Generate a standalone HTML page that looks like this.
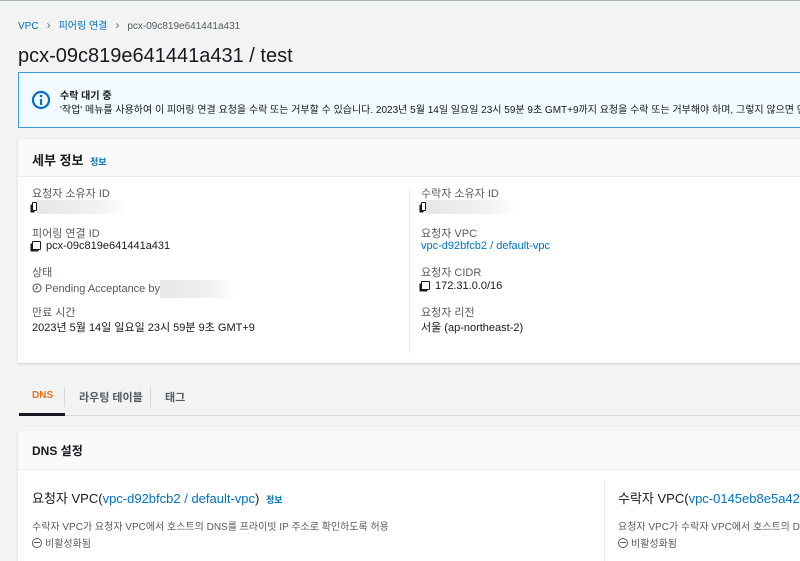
<!DOCTYPE html>
<html><head><meta charset="utf-8"><style>
*{margin:0;padding:0;box-sizing:border-box}
html,body{height:556px}
body{width:800px;overflow:hidden;background:#f2f3f3;font-family:"Liberation Sans","Noto Sans CJK KR",sans-serif;color:#16191f;position:relative;border-top:1px solid #aab7b8}
.a{position:absolute;white-space:nowrap}
.lnk{color:#0073bb}
.lbl{color:#545b64;font-size:11px}
.val{font-size:11px}
.blur{display:inline-block;width:90px;height:14px;background:linear-gradient(90deg,#e6e6e6,#f2f2f2 70%,#fff);vertical-align:middle}
.cp{display:inline-block;width:9px;height:9px;border:1.5px solid #16191f;border-radius:1px;position:relative;margin-right:5px;vertical-align:-1px;background:#fff;box-shadow:-2px 2px 0 -0.5px #16191f}
</style></head><body>
<div class="a" style="left:18px;top:16px;font-size:10px"><span class="lnk">VPC</span><span style="color:#687078;margin:0 8px;font-size:12px">›</span><span class="lnk">피어링 연결</span><span style="color:#687078;margin:0 8px;font-size:12px">›</span><span style="color:#545b64">pcx-09c819e641441a431</span></div>
<div class="a" style="left:18px;top:44px;font-size:20px">pcx-09c819e641441a431 / test</div>
<div class="a" style="left:18px;top:71px;width:800px;height:56px;border:1px solid #3d9ad8;background:#f1faff"></div>
<svg class="a" style="left:31px;top:89px" width="20" height="20" viewBox="0 0 20 20"><circle cx="10" cy="10" r="8" fill="none" stroke="#0073bb" stroke-width="2.2"/><circle cx="10" cy="6" r="1.3" fill="#0073bb"/><path d="M10 9v6" stroke="#0073bb" stroke-width="2.2"/></svg>
<div class="a" style="left:60px;top:86px;font-size:10px;font-weight:bold">수락 대기 중</div>
<div class="a" style="left:60px;top:100px;font-size:10px">'작업' 메뉴를 사용하여 이 피어링 연결 요청을 수락 또는 거부할 수 있습니다. 2023년 5월 14일 일요일 23시 59분 9초 GMT+9까지 요청을 수락 또는 거부해야 하며, 그렇지 않으면 만료</div>
<div class="a" style="left:18px;top:138px;width:800px;height:224px;background:#fff;box-shadow:0 1px 2px rgba(0,0,0,.15)"></div>
<div class="a" style="left:18px;top:138px;width:800px;height:38px;background:#fafafa;border-bottom:1px solid #eaeded"></div>
<div class="a" style="left:32px;top:149px;font-size:13px;font-weight:bold">세부 정보 <span class="lnk" style="font-size:9px;margin-left:3px">정보</span></div>
<div class="a" style="left:409px;top:186px;width:1px;height:166px;background:#eaeded"></div>
<div class="a lbl" style="left:32px;top:184px">요청자 소유자 ID</div>
<div class="a val" style="left:32px;top:199px"><span class="cp" style="width:5px"></span><span class="blur" style="margin-left:-5px"></span></div>
<div class="a lbl" style="left:32px;top:224px">피어링 연결 ID</div>
<div class="a val" style="left:32px;top:239px"><span class="cp"></span>pcx-09c819e641441a431</div>
<div class="a lbl" style="left:32px;top:263px">상태</div>
<div class="a val" style="left:32px;top:279px;color:#545b64"><svg width="10" height="10" viewBox="0 0 10 10" style="vertical-align:-1px;margin-right:3px"><circle cx="5" cy="5" r="4" fill="none" stroke="#545b64" stroke-width="1.1"/><path d="M5 2.5V5L3.5 6.3" fill="none" stroke="#545b64" stroke-width="1.1"/></svg>Pending Acceptance by<span class="blur" style="width:75px;height:18px"></span></div>
<div class="a lbl" style="left:32px;top:303px">만료 시간</div>
<div class="a val" style="left:32px;top:318px">2023년 5월 14일 일요일 23시 59분 9초 GMT+9</div>
<div class="a lbl" style="left:421px;top:184px">수락자 소유자 ID</div>
<div class="a val" style="left:421px;top:199px"><span class="cp" style="width:5px"></span><span class="blur" style="margin-left:-5px"></span></div>
<div class="a lbl" style="left:421px;top:224px">요청자 VPC</div>
<div class="a val lnk" style="left:421px;top:239px">vpc-d92bfcb2 / default-vpc</div>
<div class="a lbl" style="left:421px;top:263px">요청자 CIDR</div>
<div class="a val" style="left:421px;top:279px"><span class="cp"></span>172.31.0.0/16</div>
<div class="a lbl" style="left:421px;top:303px">요청자 리전</div>
<div class="a val" style="left:421px;top:318px">서울 (ap-northeast-2)</div>
<div class="a" style="left:18px;top:414px;width:800px;height:1px;background:#d5dbdb"></div>
<div class="a" style="left:19px;top:412px;width:46px;height:3px;background:#16191f"></div>
<div class="a" style="left:32px;top:389px;font-size:10px;font-weight:bold;color:#ec7211">DNS</div>
<div class="a" style="left:64px;top:386px;width:1px;height:20px;background:#d5dbdb"></div>
<div class="a" style="left:79px;top:388px;font-size:11px;font-weight:bold;color:#545b64">라우팅 테이블</div>
<div class="a" style="left:150px;top:386px;width:1px;height:20px;background:#d5dbdb"></div>
<div class="a" style="left:165px;top:388px;font-size:11px;font-weight:bold;color:#545b64">태그</div>
<div class="a" style="left:18px;top:430px;width:800px;height:130px;background:#fff;box-shadow:0 1px 2px rgba(0,0,0,.15)"></div>
<div class="a" style="left:18px;top:430px;width:800px;height:39px;background:#fafafa;border-bottom:1px solid #eaeded"></div>
<div class="a" style="left:32px;top:441px;font-size:12px;font-weight:bold">DNS 설정</div>
<div class="a" style="left:604px;top:480px;width:1px;height:80px;background:#eaeded"></div>
<div class="a" style="left:32px;top:487px;font-size:13px">요청자 VPC(<span class="lnk">vpc-d92bfcb2 / default-vpc</span>) <span class="lnk" style="font-size:9px;font-weight:bold;margin-left:3px">정보</span></div>
<div class="a lbl" style="left:32px;top:517px;font-size:10px">수락자 VPC가 요청자 VPC에서 호스트의 DNS를 프라이빗 IP 주소로 확인하도록 허용</div>
<div class="a" style="left:32px;top:534px;font-size:10px;color:#545b64"><span style="display:inline-block;width:10px;height:10px;border:1.3px solid #545b64;border-radius:50%;vertical-align:-1px;margin-right:3px;position:relative"><span style="position:absolute;left:1px;right:1px;top:3px;height:1.3px;background:#545b64"></span></span>비활성화됨</div>
<div class="a" style="left:618px;top:487px;font-size:13px">수락자 VPC(<span class="lnk">vpc-0145eb8e5a42ee</span></div>
<div class="a lbl" style="left:618px;top:517px;font-size:10px">요청자 VPC가 수락자 VPC에서 호스트의 DNS</div>
<div class="a" style="left:618px;top:534px;font-size:10px;color:#545b64"><span style="display:inline-block;width:10px;height:10px;border:1.3px solid #545b64;border-radius:50%;vertical-align:-1px;margin-right:3px;position:relative"><span style="position:absolute;left:1px;right:1px;top:3px;height:1.3px;background:#545b64"></span></span>비활성화됨</div>
</body></html>
